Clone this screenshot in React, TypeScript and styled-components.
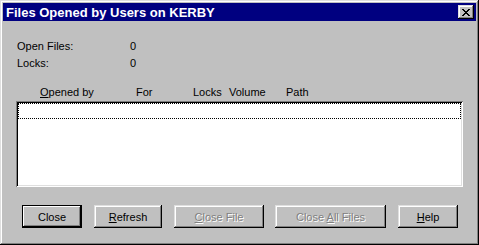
import React from 'react';
import styled, { createGlobalStyle, css } from 'styled-components';

const GlobalStyle = createGlobalStyle`
	html, body {
		margin: 0;
		padding: 0;
		background: #c0c0c0;
	}
	body {
		font-family: 'Liberation Sans', Arial, sans-serif;
		font-size: 11px;
		-webkit-font-smoothing: none;
	}
`;

const bevelOut = css`
	box-shadow: inset -1px -1px #000, inset 1px 1px #dfdfdf,
		inset -2px -2px #808080, inset 2px 2px #fff;
`;

const Window = styled.div`
	box-sizing: border-box;
	width: 479px;
	height: 245px;
	padding: 3px;
	background: #c0c0c0;
	display: flex;
	flex-direction: column;
	${bevelOut};
`;

const TitleBar = styled.div`
	height: 18px;
	display: flex;
	align-items: center;
	justify-content: space-between;
	padding: 0 2px 0 3px;
	background: #000080;
	color: #fff;
	font-weight: bold;
	font-size: 13px;
`;

const CloseBox = styled.div`
	box-sizing: border-box;
	width: 16px;
	height: 14px;
	display: flex;
	align-items: center;
	justify-content: center;
	background: #c0c0c0;
	${bevelOut};

	svg {
		display: block;
	}
`;

const Content = styled.div`
	flex: 1;
	display: flex;
	flex-direction: column;
	padding: 19px 13px 0 13px;
	color: #000;
`;

const Stats = styled.div`
	display: grid;
	grid-template-columns: 113px auto;
	grid-auto-rows: 17px;
	padding-left: 1px;
	line-height: 13px;
`;

const Header = styled.div`
	display: grid;
	grid-template-columns: 96px 57px 36px 57px auto;
	margin-top: 12px;
	padding-left: 24px;
	height: 14px;
	line-height: 13px;
`;

const ListBox = styled.div`
	box-sizing: border-box;
	margin-top: 1px;
	height: 86px;
	padding: 2px;
	background: #fff;
	box-shadow: inset 1px 1px #808080, inset -1px -1px #fff,
		inset 2px 2px #000, inset -2px -2px #dfdfdf;
`;

const FocusRow = styled.div`
	height: 16px;
	border: 1px dotted #000;
	box-sizing: border-box;
`;

const ButtonRow = styled.div`
	display: flex;
	margin-top: 18px;
	padding-left: 6px;
`;

const Button = styled.button<{ w: number; gap: number; isDefault?: boolean }>`
	box-sizing: border-box;
	width: ${({ w }) => w}px;
	height: 23px;
	margin-right: ${({ gap }) => gap}px;
	padding: 0;
	border: none;
	background: #c0c0c0;
	font-family: 'Liberation Sans', Arial, sans-serif;
	font-size: 11px;
	font-weight: normal;
	color: #000;
	${bevelOut};

	${({ isDefault }) =>
		isDefault &&
		css`
			box-shadow: inset -1px -1px #000, inset 1px 1px #000,
				inset -2px -2px #000, inset 2px 2px #fff, inset -3px -3px #808080;
		`}

	&:disabled {
		color: #808080;
		text-shadow: 1px 1px #fff;
	}
`;

const Key = styled.span`
	text-decoration: underline;
`;

export default function App() {
	return (
		<>
			<GlobalStyle />
			<Window>
				<TitleBar>
					<span>Files Opened by Users on KERBY</span>
					<CloseBox>
						<svg width="8" height="7" viewBox="0 0 8 7">
							<path
								d="M0 0h2v1h1v1h2V1h1V0h2v1H7v1H6v1H5v1h1v1h1v1h1v1H6V6H5V5H3v1H2v1H0V6h1V5h1V4h1V3H2V2H1V1H0z"
								fill="#000"
							/>
						</svg>
					</CloseBox>
				</TitleBar>
				<Content>
					<Stats>
						<span>Open Files:</span>
						<span>0</span>
						<span>Locks:</span>
						<span>0</span>
					</Stats>
					<Header>
						<span>
							<Key>O</Key>pened by
						</span>
						<span>For</span>
						<span>Locks</span>
						<span>Volume</span>
						<span>Path</span>
					</Header>
					<ListBox>
						<FocusRow />
					</ListBox>
					<ButtonRow>
						<Button w={60} gap={12} isDefault>
							Close
						</Button>
						<Button w={68} gap={12}>
							<Key>R</Key>efresh
						</Button>
						<Button w={90} gap={11} disabled>
							<Key>C</Key>lose File
						</Button>
						<Button w={111} gap={12} disabled>
							Close <Key>A</Key>ll Files
						</Button>
						<Button w={60} gap={0}>
							<Key>H</Key>elp
						</Button>
					</ButtonRow>
				</Content>
			</Window>
		</>
	);
}
